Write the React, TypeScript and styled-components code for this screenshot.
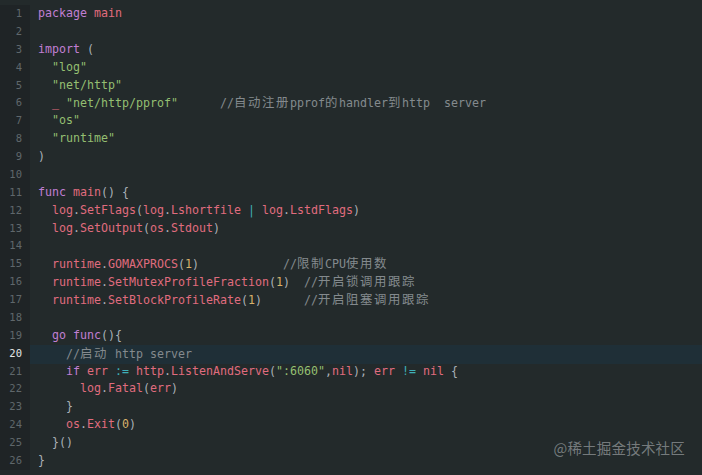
import React from "react";
import styled, { createGlobalStyle } from "styled-components";

type Kind = "k" | "i" | "s" | "n" | "p" | "o" | "c" | "t";
type Token = [Kind, string];

const colors: Record<Kind, string> = {
  k: "#c17fd3",
  i: "#e06c7e",
  s: "#94bf71",
  n: "#d8b16a",
  p: "#aab1b8",
  o: "#3fb0b8",
  c: "#848a8e",
  t: "#aab1b8",
};

const GlobalStyle = createGlobalStyle`
  html, body {
    margin: 0;
    padding: 0;
    background: #232a2b;
  }
`;

const Editor = styled.div`
  position: relative;
  width: 702px;
  height: 475px;
  overflow: hidden;
  background: #232a2b;
  padding-top: 5px;
  box-sizing: border-box;
  font-family: "DejaVu Sans Mono", "Liberation Mono", monospace;
  font-size: 11.63px;
`;

const Row = styled.div`
  display: grid;
  grid-template-columns: 30px 1fr;
  height: 17.88px;
  line-height: 17.88px;
  white-space: pre;
`;

const Gutter = styled.div<{ $active?: boolean }>`
  background: #1f2426;
  color: ${({ $active }) => ($active ? "#e4e6e7" : "#5f676b")};
  font-size: 10.5px;
  text-align: right;
  padding-right: 8px;
`;

const Code = styled.div<{ $active?: boolean }>`
  background: ${({ $active }) => ($active ? "#1f2f37" : "transparent")};
  padding-left: 8px;
`;

const Tok = styled.span<{ $kind: Kind }>`
  color: ${({ $kind }) => colors[$kind]};
`;

const Wide = styled.span`
  font-family: "Noto Sans CJK SC", sans-serif;
  font-size: 12.4px;
  letter-spacing: 1.6px;
`;

const Watermark = styled.div`
  position: absolute;
  right: 17px;
  bottom: 17px;
  font-family: "Noto Sans CJK SC", "Noto Sans", sans-serif;
  font-size: 14.5px;
  color: rgba(190, 194, 196, 0.55);
  letter-spacing: 0.2px;
`;

const id = (s: string): Token => ["i", s];
const p = (s: string): Token => ["p", s];
const sp = (s: string): Token => ["t", s];

const lines: Token[][] = [
  [["k", "package"], sp(" "), id("main")],
  [],
  [["k", "import"], sp(" "), p("(")],
  [sp("  "), ["s", '"log"']],
  [sp("  "), ["s", '"net/http"']],
  [sp("  "), id("_"), sp(" "), ["s", '"net/http/pprof"'], sp("      "), ["c", "//自动注册pprof的handler到http  server"]],
  [sp("  "), ["s", '"os"']],
  [sp("  "), ["s", '"runtime"']],
  [p(")")],
  [],
  [["k", "func"], sp(" "), id("main"), p("() {")],
  [sp("  "), id("log"), p("."), id("SetFlags"), p("("), id("log"), p("."), id("Lshortfile"), sp(" "), ["o", "|"], sp(" "), id("log"), p("."), id("LstdFlags"), p(")")],
  [sp("  "), id("log"), p("."), id("SetOutput"), p("("), id("os"), p("."), id("Stdout"), p(")")],
  [],
  [sp("  "), id("runtime"), p("."), id("GOMAXPROCS"), p("("), ["n", "1"], p(")"), sp("            "), ["c", "//限制CPU使用数"]],
  [sp("  "), id("runtime"), p("."), id("SetMutexProfileFraction"), p("("), ["n", "1"], p(")"), sp("  "), ["c", "//开启锁调用跟踪"]],
  [sp("  "), id("runtime"), p("."), id("SetBlockProfileRate"), p("("), ["n", "1"], p(")"), sp("      "), ["c", "//开启阻塞调用跟踪"]],
  [],
  [sp("  "), ["k", "go"], sp(" "), ["k", "func"], p("(){")],
  [sp("    "), ["c", "//启动 http server"]],
  [sp("    "), ["k", "if"], sp(" "), id("err"), sp(" "), ["o", ":="], sp(" "), id("http"), p("."), id("ListenAndServe"), p("("), ["s", '":6060"'], p(","), id("nil"), p(");"), sp(" "), id("err"), sp(" "), ["o", "!="], sp(" "), id("nil"), sp(" "), p("{")],
  [sp("      "), id("log"), p("."), id("Fatal"), p("("), id("err"), p(")")],
  [sp("    "), p("}")],
  [sp("    "), id("os"), p("."), id("Exit"), p("("), ["n", "0"], p(")")],
  [sp("  "), p("}()")],
  [p("}")],
];

const ACTIVE_LINE = 20;

// CJK glyphs take two cells in the editor grid
const renderText = (text: string) => {
  const parts = text.split(/([\u3400-\u9fff]+)/);
  return parts.map((part, i) =>
    /[\u3400-\u9fff]/.test(part) ? <Wide key={i}>{part}</Wide> : part
  );
};

const App: React.FC = () => {
  return (
    <>
      <GlobalStyle />
      <Editor>
        {lines.map((tokens, index) => {
          const active = index + 1 === ACTIVE_LINE;
          return (
            <Row key={index}>
              <Gutter $active={active}>{index + 1}</Gutter>
              <Code $active={active}>
                {tokens.map(([kind, text], ti) => (
                  <Tok key={ti} $kind={kind}>
                    {kind === "c" ? renderText(text) : text}
                  </Tok>
                ))}
                {tokens.length === 0 ? " " : null}
              </Code>
            </Row>
          );
        })}
        <Watermark>@稀土掘金技术社区</Watermark>
      </Editor>
    </>
  );
};

export default App;
